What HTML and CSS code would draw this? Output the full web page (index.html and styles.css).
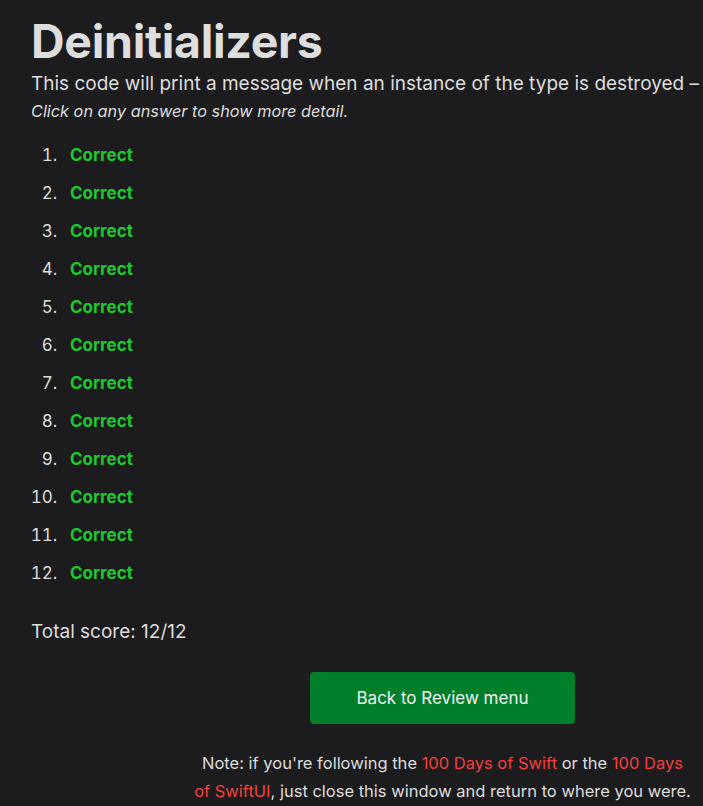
FILE: index.html
```html
<!DOCTYPE html>
<html>
<head>
<meta charset="utf-8">
<link rel="stylesheet" href="styles.css">
</head>
<body>
<main class="page">
  <h1 class="title">Deinitializers</h1>
  <p class="subtitle">This code will print a message when an instance of the type is destroyed – true or false?</p>
  <p class="hint">Click on any answer to show more detail.</p>
  <ol class="answers">
    <li><span class="correct">Correct</span></li>
    <li><span class="correct">Correct</span></li>
    <li><span class="correct">Correct</span></li>
    <li><span class="correct">Correct</span></li>
    <li><span class="correct">Correct</span></li>
    <li><span class="correct">Correct</span></li>
    <li><span class="correct">Correct</span></li>
    <li><span class="correct">Correct</span></li>
    <li><span class="correct">Correct</span></li>
    <li><span class="correct">Correct</span></li>
    <li><span class="correct">Correct</span></li>
    <li><span class="correct">Correct</span></li>
  </ol>
  <p class="score">Total score: 12/12</p>
  <div class="actions">
    <a class="btn" href="#">Back to Review menu</a>
  </div>
  <p class="note">Note: if you're following the <a href="#">100 Days of Swift</a> or the <a href="#">100 Days of SwiftUI</a>, just close this window and return to where you were.</p>
</main>
</body>
</html>
```
FILE: styles.css
```css
html { overflow: hidden; }
body {
  margin: 0;
  background: #1c1c1e;
  color: #dedede;
  font-family: Inter, "Noto Sans", sans-serif;
}
.page {
  width: 823px;
  padding: 13px 0 0 31px;
}
.title {
  margin: 0;
  font-size: 46.5px;
  font-weight: 700;
  line-height: 56px;
  letter-spacing: -0.3px;
}
.subtitle {
  margin: 0;
  font-size: 19px;
  line-height: 30px;
  white-space: nowrap;
}
.hint {
  margin: 0;
  font-size: 16.3px;
  line-height: 24px;
  font-style: italic;
}
.answers {
  margin: 13px 0 0;
  padding-left: 31px;
  font-size: 17px;
  line-height: 38px;
}
.answers li { padding-left: 8px; }
.answers li::marker { color: #dedede; }
.correct { color: #1ec82f; font-weight: 700; }
.score {
  margin: 25px 0 0;
  font-size: 19px;
  line-height: 30px;
}
.actions {
  display: flex;
  justify-content: center;
  margin-top: 25px;
}
.btn {
  display: block;
  width: 265px;
  height: 52px;
  line-height: 52px;
  text-align: center;
  background: #007f2a;
  color: #f2f2f2;
  border-radius: 4px;
  font-size: 17px;
  text-decoration: none;
}
.note {
  width: 500px;
  margin: 25px auto 0;
  text-align: center;
  font-size: 16.5px;
  line-height: 28px;
}
.note a { color: #f4403f; text-decoration: none; }
```
